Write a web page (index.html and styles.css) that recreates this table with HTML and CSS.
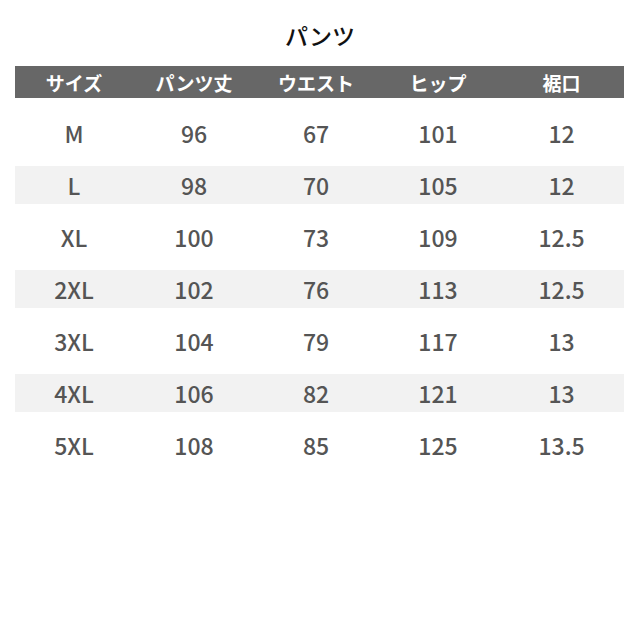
FILE: index.html
```html
<!DOCTYPE html>
<html lang="ja">
<head>
<meta charset="utf-8">
<link rel="stylesheet" href="styles.css">
</head>
<body>
<div class="page">
  <h1 class="title">パンツ</h1>
  <div class="table">
    <div class="row head"><div>サイズ</div><div>パンツ丈</div><div>ウエスト</div><div>ヒップ</div><div>裾口</div></div>
    <div class="row"><div>M</div><div>96</div><div>67</div><div>101</div><div>12</div></div>
    <div class="row alt"><div>L</div><div>98</div><div>70</div><div>105</div><div>12</div></div>
    <div class="row"><div>XL</div><div>100</div><div>73</div><div>109</div><div>12.5</div></div>
    <div class="row alt"><div>2XL</div><div>102</div><div>76</div><div>113</div><div>12.5</div></div>
    <div class="row"><div>3XL</div><div>104</div><div>79</div><div>117</div><div>13</div></div>
    <div class="row alt"><div>4XL</div><div>106</div><div>82</div><div>121</div><div>13</div></div>
    <div class="row"><div>5XL</div><div>108</div><div>85</div><div>125</div><div>13.5</div></div>
  </div>
</div>
</body>
</html>
```
FILE: styles.css
```css
html, body {
  margin: 0;
  padding: 0;
  background: #ffffff;
}
.page {
  width: 640px;
  height: 640px;
  font-family: "Noto Sans CJK JP", "Noto Sans", sans-serif;
}
.title {
  margin: 0;
  padding-top: 21px;
  height: 66px;
  box-sizing: border-box;
  text-align: center;
  font-size: 23px;
  line-height: 28px;
  font-weight: 500;
  color: #111;
}
.table {
  margin: 0 16px 0 15px;
  display: flex;
  flex-direction: column;
  gap: 14px;
}
.row {
  display: grid;
  grid-template-columns: 118px 122px 122px 122px 125px;
  height: 38px;
  align-items: center;
  justify-items: center;
  font-size: 23px;
  font-weight: 500;
  color: #555;
}
.row.head {
  height: 32px;
  margin-bottom: 2px;
  background: #676767;
  color: #fff;
  font-size: 19px;
  font-weight: 700;
}
.row.alt {
  background: #f2f2f2;
}
```
